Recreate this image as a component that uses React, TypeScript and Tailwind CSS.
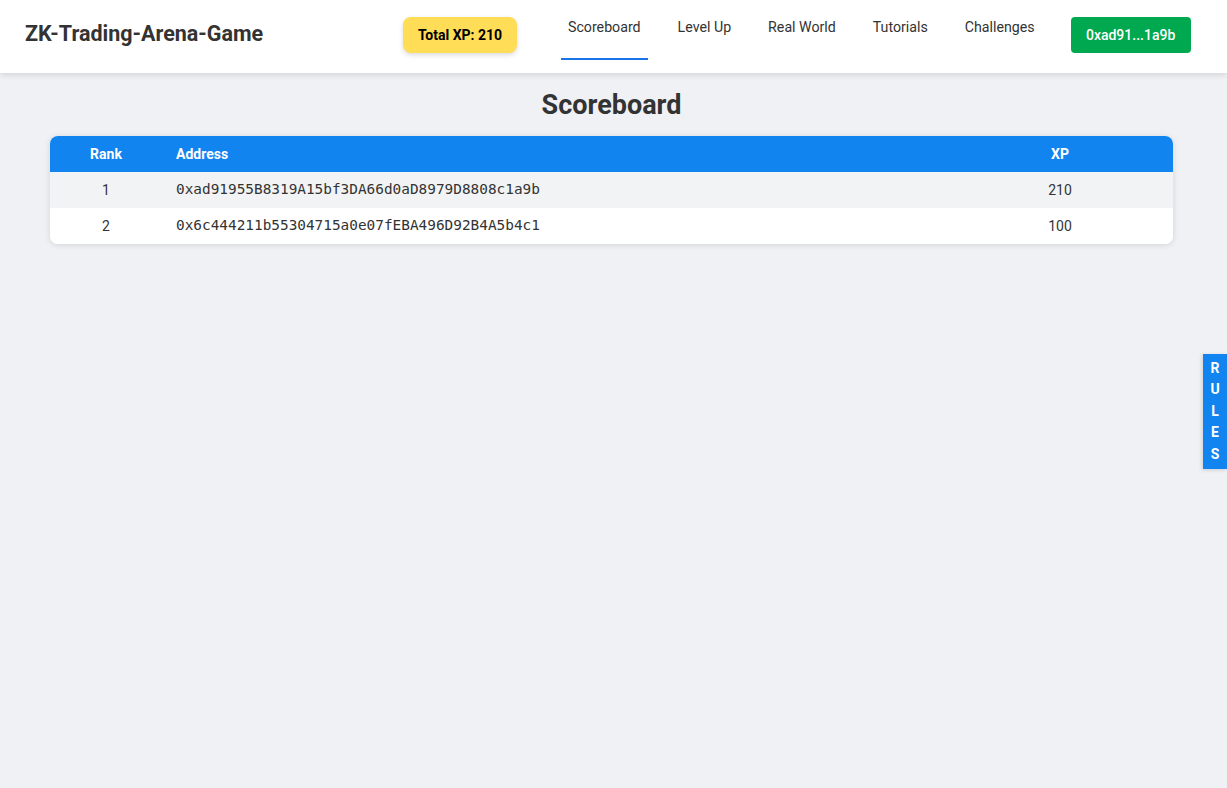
const navItems = ['Scoreboard', 'Level Up', 'Real World', 'Tutorials', 'Challenges']

const rows = [
  { rank: 1, address: '0xad91955B8319A15bf3DA66d0aD8979D8808c1a9b', xp: 210 },
  { rank: 2, address: '0x6c444211b55304715a0e07fEBA496D92B4A5b4c1', xp: 100 },
]

function Header() {
  return (
    <header className="h-[73px] bg-white shadow-[0_2px_6px_rgba(0,0,0,0.12)] flex items-start pt-[17px] relative z-10">
      <h1 className="ml-[25px] w-[240px] text-[21.5px] leading-[34px] font-bold text-[#333] whitespace-nowrap">ZK-Trading-Arena-Game</h1>
      <div className="ml-[138px] h-[36px] w-[114px] rounded-lg bg-[#ffdd57] shadow-[0_2px_5px_rgba(0,0,0,0.15)] flex items-center justify-center text-[14px] font-bold text-black">
        Total XP: 210
      </div>
      <nav className="ml-[44px] flex gap-[23px]">
        {navItems.map((item, i) => (
          <a
            key={item}
            className={`h-[43px] px-[7px] text-[14.2px] leading-[20px] text-[#333] border-b-2 ${
              i === 0 ? 'border-[#1a73e8]' : 'border-transparent'
            }`}
          >
            {item}
          </a>
        ))}
      </nav>
      <button className="ml-[29px] h-[36px] w-[120px] rounded bg-[#00a84f] text-white text-[14px] font-medium">
        0xad91...1a9b
      </button>
    </header>
  )
}

export default function App() {
  return (
    <div className="min-h-[788px] bg-[#f0f1f5] font-['Roboto',sans-serif] text-[#333] relative overflow-hidden">
      <Header />
      <main className="ml-[50px] mr-[54px]">
        <h2 className="text-center text-[27px] font-bold text-[#333] leading-[32px] mt-[16px] mb-[15px]">Scoreboard</h2>
        <div className="bg-white rounded-lg shadow-[0_1px_6px_rgba(0,0,0,0.12)] overflow-hidden">
          <div className="flex h-[36px] items-center bg-[#1184f0] text-white text-[14px] font-bold">
            <div className="w-[112px] text-center">Rank</div>
            <div className="flex-1 pl-[14px]">Address</div>
            <div className="w-[226px] text-center">XP</div>
          </div>
          {rows.map((r, i) => (
            <div
              key={r.rank}
              className={`flex h-[36px] items-center text-[14px] ${i % 2 === 0 ? 'bg-[#f2f3f5]' : 'bg-white'}`}
            >
              <div className="w-[112px] text-center">{r.rank}</div>
              <div className="flex-1 pl-[14px] font-['DejaVu_Sans_Mono',monospace] text-[14.4px]">{r.address}</div>
              <div className="w-[226px] text-center">{r.xp}</div>
            </div>
          ))}
        </div>
      </main>
      <div className="absolute right-0 top-[354px] w-[24px] h-[115px] bg-[#1184f0] shadow-[-1px_1px_4px_rgba(0,0,0,0.15)] flex flex-col items-center justify-center text-white text-[14px] font-bold leading-[21.5px]">
        {'RULES'.split('').map((c, i) => (
          <span key={i}>{c}</span>
        ))}
      </div>
    </div>
  )
}
